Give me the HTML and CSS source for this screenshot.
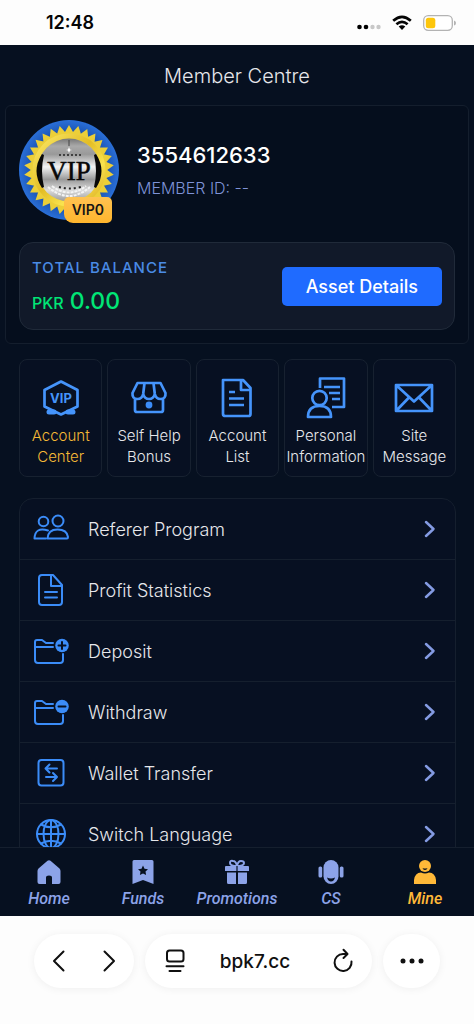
FILE: index.html
```html
<!DOCTYPE html>
<html lang="en">
<head>
<meta charset="utf-8">
<meta name="viewport" content="width=device-width, initial-scale=1">
<title>Member Centre</title>
<link rel="stylesheet" href="styles.css">
</head>
<body>
<div class="statusbar">
  <span class="clock">12:48</span>
  <div class="indicators">
    <svg class="signal" viewBox="0 0 24 6" width="24" height="6"><circle cx="2.5" cy="3" r="2.3"/><circle cx="9" cy="3" r="2.3"/><circle cx="15.500" cy="3" r="2.2" fill="#c8c8c8"/><circle cx="21.500" cy="3" r="2.2" fill="#c8c8c8"/></svg>
    <svg viewBox="0 0 20 16" width="20" height="16" fill="none" stroke="#050505" stroke-width="2.700"><path d="M1.200 5.800Q10-2 18.800 5.800M4.400 9.200Q10 4.400 15.600 9.200"/><path d="M6.700 11.600Q10 8.800 13.300 11.600L10 15Z" fill="#050505" stroke="none"/></svg>
    <svg viewBox="0 0 33 16" width="33" height="16"><rect x=".7" y=".7" width="28.600" height="14.600" rx="4.500" fill="#fff" stroke="#b3b3b3" stroke-width="1.300"/><rect x="2.800" y="2.800" width="9.500" height="10.400" rx="2.500" fill="#fdc60b"/><path d="M31 5.500Q33 6 33 8T31 10.500Z" fill="#b3b3b3"/></svg>
  </div>
</div>

<div class="app">
  <main class="content">
    <h1 class="title">Member Centre</h1>

    <section class="profile">
      <div class="identity">
        <div class="avatar">
          <svg viewBox="-50 -50 100 100" width="100" height="100">
            <defs>
              <linearGradient id="gold" x1="0" y1="0" x2="1" y2="1"><stop offset="0" stop-color="#fbe968"/><stop offset=".45" stop-color="#e3bd25"/><stop offset=".7" stop-color="#f9e34e"/><stop offset="1" stop-color="#d9a81f"/></linearGradient>
              <linearGradient id="silver" x1="0" y1="0" x2="0" y2="1"><stop offset="0" stop-color="#777"/><stop offset=".12" stop-color="#aaa"/><stop offset=".25" stop-color="#999"/><stop offset=".45" stop-color="#f4f4f4"/><stop offset=".65" stop-color="#999"/><stop offset=".82" stop-color="#ddd"/><stop offset="1" stop-color="#999"/></linearGradient>
              <radialGradient id="blue"><stop offset=".7" stop-color="#174da8"/><stop offset="1" stop-color="#2a6fd8"/></radialGradient>
              <path id="tri" d="M0-45L39 22.500H-39Z"/>
            </defs>
            <circle r="50" fill="url(#blue)"/>
            <g fill="#eccf38">
              <use href="#tri"/><use href="#tri" transform="rotate(12)"/><use href="#tri" transform="rotate(24)"/><use href="#tri" transform="rotate(36)"/><use href="#tri" transform="rotate(48)"/><use href="#tri" transform="rotate(60)"/><use href="#tri" transform="rotate(72)"/><use href="#tri" transform="rotate(84)"/><use href="#tri" transform="rotate(96)"/><use href="#tri" transform="rotate(108)"/>
            </g>
            <circle r="34" fill="none" stroke="url(#gold)" stroke-width="5"/>
            <circle r="31.500" fill="url(#silver)"/>
            <path d="M-27-16Q-38 1-27 18L-25 17Q-29 1-25-15ZM27-16Q38 1 27 18L25 17Q29 1 25-15Z" fill="#080808"/>
            <path d="M-10-15H12" stroke="#222" stroke-width="1.500" stroke-dasharray="2 2"/>
            <path d="M-10 17Q0 20 12 17" fill="none" stroke="#222" stroke-width="2" stroke-dasharray="2 3"/>
            <path d="M-21 17Q0 35 21 17M-17 16Q0 29 17 16" fill="none" stroke="#f4f4f4" stroke-width="2" stroke-dasharray="3 1"/>
            <path d="M0-30V-24" stroke="#444"/><path d="M0-23L1-20.500L3-20L1-19.500L0-17L-1-19.500L-3-20L-1-20.500Z" fill="#fff"/>
            <text y="10" text-anchor="middle" class="seal">VIP</text>
          </svg>
          <span class="level">VIP0</span>
        </div>
        <div class="who">
          <span class="username">3554612633</span>
          <span class="memberid">MEMBER ID: --</span>
        </div>
      </div>
      <div class="balance">
        <div class="sums">
          <span class="balance-label">TOTAL BALANCE</span>
          <span class="amount"><span class="currency">PKR</span> 0.00</span>
        </div>
        <button class="details" type="button">Asset Details</button>
      </div>
    </section>

    <nav class="tiles" aria-label="Account">
      <a class="tile active" href="#center">
        <svg viewBox="0 0 40 40" width="40" height="40"><path d="M20 3.500L36.500 12V28.500L20 36.500L3.500 28.500V12Z"/><path d="M8 34L13 34M32 34L27 34" stroke-width="5" stroke-linecap="round"/><text x="20" y="25" text-anchor="middle" class="vip">VIP</text></svg>
        <span>Account Center</span></a>
      <a class="tile" href="#bonus">
        <svg viewBox="0 0 40 40" width="40" height="40"><path d="M8.500 5H31.500L36.500 15Q37 21 31.500 21Q27 21 25.800 16Q24.500 21 20 21Q15.500 21 14.200 16Q13 21 8.500 21Q3 21 3.500 15ZM15.500 5L14.200 16M24.500 5L25.800 16M6 21V32Q6 34 8 34H32Q34 34 34 32V21"/><circle cx="20" cy="27" r="3.400" class="solid"/></svg>
        <span>Self Help Bonus</span></a>
      <a class="tile" href="#list">
        <svg viewBox="0 0 40 40" width="40" height="40"><path d="M6.500 2H26L33.500 10V36Q33.500 38 31.500 38H8.500Q6 38 6 36V2ZM24 2V12H33.500M12 14H18M12 20.500H27M12 27H27"/></svg>
        <span>Account List</span></a>
      <a class="tile" href="#info">
        <svg viewBox="0 0 40 40" width="40" height="40"><path d="M14 10V.5H38V29H26M18 9H34M23 15H34M26 21H34"/><circle cx="13.500" cy="20" r="7.200"/><path d="M2 39Q2 28 13.500 28T25 39Z"/></svg>
        <span>Personal Information</span></a>
      <a class="tile" href="#message">
        <svg viewBox="0 0 40 40" width="40" height="40"><path d="M2 7H38V33H2ZM2 7L20 23.500L38 7M2 33L15 19.500M38 33L25 19.500"/></svg>
        <span>Site Message</span></a>
    </nav>

    <nav class="menu" aria-label="Services">
      <a class="row" href="#referer"><svg viewBox="0 0 36 36" width="36" height="36"><circle cx="10.500" cy="10.500" r="4.800"/><circle cx="25" cy="10" r="5.500"/><path d="M15 19.500Q2 15.500 1.500 27.500H13"/><path d="M14.500 27.500Q15 18.500 24.500 18.500T35 26Q35 27.500 34 27.500Z"/></svg><span>Referer Program</span><svg class="chev" viewBox="0 0 12 18" width="12" height="18"><path d="M2 2L9.500 9L2 16"/></svg></a>
      <a class="row" href="#profit"><svg viewBox="0 0 36 36" width="36" height="36"><path d="M9 3H20L29 13V30Q29 33 26 33H9Q6 33 6 30V6Q6 3 9 3ZM18 3V14H29M12 20H24M12 25.500H24"/></svg><span>Profit Statistics</span><svg class="chev" viewBox="0 0 12 18" width="12" height="18"><path d="M2 2L9.500 9L2 16"/></svg></a>
      <a class="row" href="#deposit"><svg viewBox="0 0 36 36" width="36" height="36"><path d="M30 21V27Q30 30 27 30H5Q2 30 2 27V9Q2 7 4 7H9L13 10H20M2 14H20"/><circle cx="29" cy="12.500" r="6.800" class="solid"/><path d="M25.500 12.500H32.500M29 9V16" class="cut"/></svg><span>Deposit</span><svg class="chev" viewBox="0 0 12 18" width="12" height="18"><path d="M2 2L9.500 9L2 16"/></svg></a>
      <a class="row" href="#withdraw"><svg viewBox="0 0 36 36" width="36" height="36"><path d="M30 21V27Q30 30 27 30H5Q2 30 2 27V9Q2 7 4 7H9L13 10H20M2 14H20"/><circle cx="29" cy="12.500" r="6.800" class="solid"/><path d="M25.500 12.500H32.500" class="cut"/></svg><span>Withdraw</span><svg class="chev" viewBox="0 0 12 18" width="12" height="18"><path d="M2 2L9.500 9L2 16"/></svg></a>
      <a class="row" href="#transfer"><svg viewBox="0 0 36 36" width="36" height="36"><rect x="5.500" y="5" width="25" height="25.500" rx="3"/><path d="M24 13.500H12.500M16.500 9.500L12.500 13.500L16.500 17.500M13 22H24M20 18L24 22L20 26"/></svg><span>Wallet Transfer</span><svg class="chev" viewBox="0 0 12 18" width="12" height="18"><path d="M2 2L9.500 9L2 16"/></svg></a>
      <a class="row" href="#language"><svg viewBox="0 0 36 36" width="36" height="36"><circle cx="18" cy="18" r="14"/><ellipse cx="18" cy="18" rx="7.500" ry="14"/><path d="M18 4V32M4 18H32M8 8.500Q18 14 28 8.500M8 27.500Q18 22 28 27.500"/></svg><span>Switch Language</span><svg class="chev" viewBox="0 0 12 18" width="12" height="18"><path d="M2 2L9.500 9L2 16"/></svg></a>
    </nav>
  </main>

  <nav class="tabs" aria-label="Main">
    <a class="tab" href="#home"><svg viewBox="0 0 24 24" width="24" height="24"><path d="M10.500.8Q12-.5 13.500.8L22.500 8.500Q23.500 9.500 23.500 11V22Q23.500 24 21.500 24H15V17.500Q15 15.500 12 15.500T9 17.500V24H2.500Q.5 24 .5 22V11Q.5 9.500 1.500 8.500Z"/></svg><span>Home</span></a>
    <a class="tab" href="#funds"><svg viewBox="0 0 24 24" width="24" height="24"><path d="M3 0H21Q22.500 0 22.500 1.500V24L12 20L1.500 24V1.500Q1.500 0 3 0Z"/><path class="hole" d="M12 5.500L13.500 8.700L17 9.200L14.500 11.600L15.100 15L12 13.400L8.900 15L9.500 11.600L7 9.200L10.500 8.700Z"/></svg><span>Funds</span></a>
    <a class="tab" href="#promotions"><svg viewBox="0 0 24 24" width="24" height="24"><path d="M1 6H23Q24 6 24 7V11H0V7Q0 6 1 6ZM2 12.500H11V24H3.500Q2 24 2 22.500ZM13 12.500H22V22.500Q22 24 20.500 24H13Z"/><path d="M12 6Q5 6 5 3T8 1Q11 1 12 6Q13 1 16 1T19 3Q19 6 12 6Z" fill="none" stroke="#8ca3e8" stroke-width="2"/><path class="hole" d="M11.400 6H12.600V12H11.400Z"/></svg><span>Promotions</span></a>
    <a class="tab" href="#cs"><svg viewBox="0 0 24 24" width="24" height="24"><rect x="4.500" y="0" width="15" height="24" rx="7.500"/><rect x="-.5" y="6.500" width="3.700" height="11" rx="1.600"/><rect x="20.800" y="6.500" width="3.700" height="11" rx="1.600"/><path class="hole" d="M8 17.500Q12 19.500 16 17.500Q15 21.500 12 21.500T8 17.500Z"/></svg><span>CS</span></a>
    <a class="tab current" href="#mine" aria-current="page"><svg viewBox="0 0 24 24" width="24" height="24"><circle cx="12" cy="6" r="6"/><path d="M1 24V20Q2 12.500 8 12.500Q12 14.500 16 12.500Q22 12.500 23 20V24Z"/><path class="hole" d="M9.500 8Q12 9 14.500 8Q14 10 12 10T9.500 8Z"/></svg><span>Mine</span></a>
  </nav>
</div>

<footer class="browser">
  <div class="pill history">
    <button type="button" aria-label="Back"><svg viewBox="0 0 24 24" width="24" height="24"><path d="M16.500 2.500L7 12L16.500 21.500"/></svg></button>
    <button type="button" aria-label="Forward"><svg viewBox="0 0 24 24" width="24" height="24"><path d="M7.500 2.500L17 12L7.500 21.500"/></svg></button>
  </div>
  <div class="pill address">
    <button type="button" aria-label="Page menu"><svg viewBox="0 0 24 24" width="24" height="24"><rect x="4" y="1.500" width="16.500" height="11" rx="2.500"/><path d="M3.500 17.200H20.500M6.500 22H17.500"/></svg></button>
    <span class="url">bpk7.cc</span>
    <button type="button" aria-label="Reload"><svg viewBox="0 0 24 24" width="24" height="24"><path d="M20.500 12.500A8.500 8.500 0 1 1 12 5H16M12.500.8L16.500 5L12.500 9"/></svg></button>
  </div>
  <button class="pill more" type="button" aria-label="More"><svg viewBox="0 0 24 6" width="24" height="6"><circle cx="3" cy="3" r="2.500"/><circle cx="12" cy="3" r="2.500"/><circle cx="21" cy="3" r="2.500"/></svg></button>
</footer>
</body>
</html>
```
FILE: styles.css
```css
* { box-sizing: border-box; }

body {
  margin: 0;
  height: 100vh;
  display: flex;
  flex-direction: column;
  background: #fdfdfd;
  font-family: Inter, "Liberation Sans", sans-serif;
}

a { color: inherit; text-decoration: none; }
button { font: inherit; color: inherit; border: 0; padding: 0; background: none; }
svg { display: block; flex: none; overflow: visible; }

.statusbar {
  flex: none;
  display: flex;
  align-items: center;
  justify-content: space-between;
  height: 45px;
  padding: 0 18px 0 46px;
}
.clock { font-size: 18px; font-weight: 600; color: #050505; }
.indicators { display: flex; align-items: center; gap: 11px; }
.signal { margin-top: 9px; }

.app {
  flex: 1;
  min-height: 0;
  display: flex;
  flex-direction: column;
  background: #061020;
  color: #e6e7eb;
}
.content { flex: 1; min-height: 0; overflow: hidden; }
.title {
  margin: 0;
  padding-top: 2px;
  font-size: 20px;
  line-height: 58px;
  font-weight: 300;
  text-align: center;
}

.profile {
  margin: 0 5px;
  padding: 14px 13px 13px;
  border: 1px solid #141e2d;
  border-radius: 6px;
  background: #050e1d;
}
.identity { display: flex; gap: 18px; }
.avatar { position: relative; }
.seal { font: 27px "Liberation Serif", serif; fill: #080808; stroke: #080808; stroke-width: 0.5px; }
.level {
  position: absolute;
  right: 7px;
  bottom: -3px;
  padding: 0 8px;
  border-radius: 5px 5px 5px 9px;
  background: linear-gradient(#ffc251, #ffb52d);
  color: #161616;
  font-size: 14px;
  line-height: 26px;
  font-weight: 600;
}
.who { display: flex; flex-direction: column; gap: 8px; padding-top: 22px; }
.username { font-size: 22px; line-height: 26px; font-weight: 500; color: #fff; }
.memberid { font-size: 16px; line-height: 24px; font-weight: 300; color: #7f93d8; }

.balance {
  display: flex;
  align-items: center;
  justify-content: space-between;
  margin-top: 22px;
  padding: 12px;
  min-height: 88px;
  border: 1px solid #202a39;
  border-radius: 14px;
  background: #111929;
}
.sums { display: flex; flex-direction: column; gap: 6px; }
.balance-label { font-size: 15px; line-height: 26px; font-weight: 500; letter-spacing: 1px; color: #4a8be5; }
.amount { font-size: 23px; line-height: 28px; font-weight: 500; color: #00e676; }
.currency { font-size: 16px; }
.details {
  padding: 0 24px;
  border-radius: 5px;
  background: #1f6bff;
  color: #fff;
  font-size: 18px;
  line-height: 39px;
  font-weight: 500;
}

.tiles {
  display: grid;
  grid-template-columns: repeat(5, minmax(0, 1fr));
  gap: 5px;
  margin: 15px 18px 21px 19px;
}
.tile {
  display: flex;
  flex-direction: column;
  align-items: center;
  gap: 7px;
  padding: 18px 1px 9px;
  border: 1px solid #172130;
  border-radius: 8px;
  background: #071022;
  font-size: 15px;
  line-height: 21px;
  font-weight: 300;
  text-align: center;
}
.tile svg { fill: none; stroke: #4594fb; stroke-width: 2.7px; stroke-linejoin: round; }
.tile .vip { font: 700 13px Inter, sans-serif; fill: #4594fb; stroke: none; }
.tile .solid, .row .solid { fill: #3b8cf8; stroke: none; }
.tile.active { color: #f5b936; }

.menu {
  margin: 0 18px 0 19px;
  border: 1px solid #151f2e;
  border-radius: 14px;
  background: #071022;
}
.row {
  display: flex;
  align-items: center;
  gap: 19px;
  height: 61px;
  padding: 0 19px 0 13px;
  border-bottom: 1px solid #151f2e;
  font-size: 18px;
  font-weight: 300;
}
.row span { flex: 1; }
.row svg { fill: none; stroke: #3b8cf8; stroke-width: 2px; stroke-linecap: round; stroke-linejoin: round; }
.row .cut { stroke: #071022; }
.row .chev { stroke: #849be3; stroke-width: 2.5px; }

.tabs {
  flex: none;
  display: grid;
  grid-template-columns: repeat(5, 1fr);
  height: 69px;
  padding: 12px 2px 0;
  border-top: 1px solid #151f2e;
  background: #061020;
  color: #8ca3e8;
}
.tab {
  display: flex;
  flex-direction: column;
  align-items: center;
  gap: 4px;
  font: italic 500 16px/22px Roboto, sans-serif;
}
.tab svg { fill: currentColor; }
.tab .hole { fill: #061020; }
.tab.current { color: #ffb938; }

.browser {
  flex: none;
  display: flex;
  gap: 11px;
  height: 108px;
  padding: 18px 34px 36px;
  color: #101010;
}
.browser svg { fill: none; stroke: currentColor; stroke-width: 2px; stroke-linecap: round; stroke-linejoin: round; }
.pill {
  display: flex;
  align-items: center;
  height: 54px;
  border-radius: 27px;
  background: #fff;
  box-shadow: 0 1px 8px rgba(0, 0, 0, 0.06);
}
.history { gap: 26px; padding: 0 13px; }
.address { flex: 1; justify-content: space-between; padding: 0 17px 0 18px; }
.url { padding-right: 8px; font-size: 19px; font-weight: 500; }
.more { width: 57px; justify-content: center; }
.browser .more svg { fill: currentColor; stroke: none; }
```
